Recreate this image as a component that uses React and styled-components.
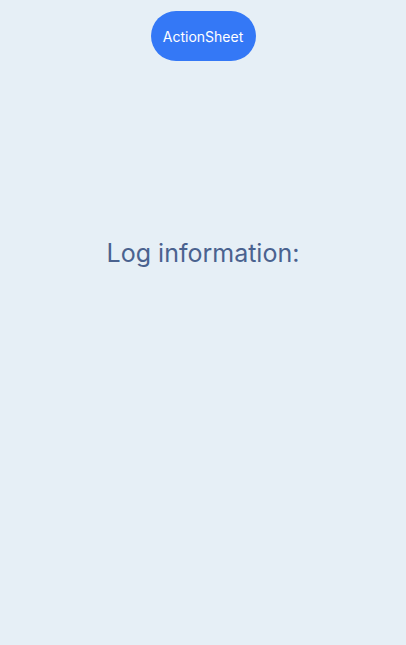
import React from 'react';
import styled, { createGlobalStyle } from 'styled-components';

const Global = createGlobalStyle`
    html, body {
        margin: 0;
        padding: 0;
        background: #e6eff6;
    }
    body {
        font-family: Inter, "Noto Sans", sans-serif;
    }
`;

const Page = styled.div`
    display: flex;
    flex-direction: column;
    align-items: center;
    width: 406px;
    height: 645px;
    padding-top: 11px;
    box-sizing: border-box;
    background: #e6eff6;
`;

const SheetButton = styled.button`
    width: 105px;
    height: 50px;
    border: none;
    border-radius: 25px;
    background: #3478f6;
    color: #ffffff;
    font-family: inherit;
    font-size: 14px;
    cursor: pointer;
`;

const Log = styled.div`
    margin-top: 175px;
    height: 34px;
    line-height: 34px;
    font-size: 25px;
    color: #4a628f;
`;

export default function App() {
    return (
        <Page>
            <Global />
            <SheetButton>ActionSheet</SheetButton>
            <Log>Log information:</Log>
        </Page>
    );
}
